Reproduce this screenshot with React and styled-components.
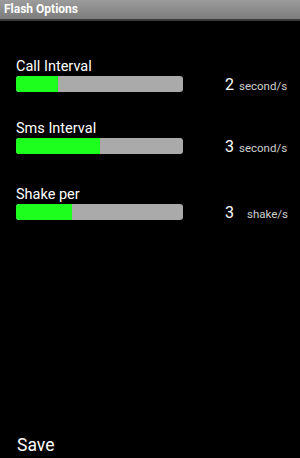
import React from 'react'
import styled, { createGlobalStyle } from 'styled-components'

const GlobalStyle = createGlobalStyle`
  html, body { margin: 0; padding: 0; background: #000; }
  body { font-family: Roboto, "Noto Sans", sans-serif; }
`

const settings = [
  { label: 'Call Interval', value: 2, unit: 'second/s', fill: 42, gap: 5, top: 37 },
  { label: 'Sms Interval', value: 3, unit: 'second/s', fill: 84, gap: 5, top: 28 },
  { label: 'Shake per', value: 3, unit: 'shake/s', fill: 56, gap: 13, top: 32 },
]

function App() {
  return (
    <Screen>
      <GlobalStyle />
      <TitleBar>Flash Options</TitleBar>
      <Content>
        {settings.map((s) => (
          <Setting key={s.label} $top={s.top}>
            <Label>{s.label}</Label>
            <Row>
              <Track>
                <Fill style={{ width: s.fill }} />
              </Track>
              <Value>
                <Number>{s.value}</Number>
                <Unit $gap={s.gap}>{s.unit}</Unit>
              </Value>
            </Row>
          </Setting>
        ))}
      </Content>
      <SaveButton>Save</SaveButton>
    </Screen>
  )
}

export default App

const Screen = styled.div`
  width: 300px;
  height: 458px;
  background: #000;
  display: flex;
  flex-direction: column;
  overflow: hidden;
`

const TitleBar = styled.div`
  height: 19px;
  background: linear-gradient(#9c9c9c, #7c7c7c);
  border-bottom: 2px solid #3a3a3a;
  color: #fff;
  font-weight: 700;
  font-size: 12px;
  line-height: 19px;
  padding-left: 4px;
`

const Content = styled.div`
  flex: 1;
  display: flex;
  flex-direction: column;
  padding-left: 16px;
`

const Setting = styled.div`
  display: flex;
  flex-direction: column;
  margin-top: ${(p) => p.$top}px;
`

const Label = styled.div`
  color: #fff;
  font-size: 14.5px;
  line-height: 18px;
`

const Row = styled.div`
  display: flex;
  align-items: center;
  height: 16px;
`

const Track = styled.div`
  width: 167px;
  height: 16px;
  border-radius: 3px;
  background: #aaaaaa;
  overflow: hidden;
`

const Fill = styled.div`
  height: 100%;
  background: #1dff1d;
`

const Value = styled.div`
  display: flex;
  align-items: baseline;
  margin-left: 42px;
`

const Number = styled.span`
  color: #fff;
  font-size: 16px;
`

const Unit = styled.span`
  color: #cfcfcf;
  font-size: 11.5px;
  margin-left: ${(p) => p.$gap}px;
`

const SaveButton = styled.div`
  color: #fff;
  font-size: 17.5px;
  padding: 0 0 2px 17px;
  line-height: 22px;
`
